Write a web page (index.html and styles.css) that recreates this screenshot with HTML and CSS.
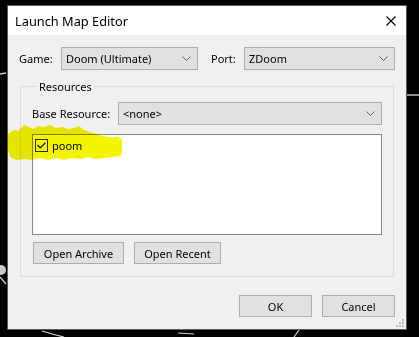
FILE: index.html
```html
<!DOCTYPE html>
<html>
  <head>
    <meta charset="utf-8">
    <title>Launch Map Editor</title>
    <link rel="stylesheet" href="styles.css">
  </head>
  <body>
    <svg class="backdrop" width="419" height="337" viewBox="0 0 419 337">
      <path d="M0 74 L6 73" stroke="#cfcfcf" stroke-width="1.5" fill="none"/>
      <path d="M407 95 L419 95" stroke="#bdbdbd" stroke-width="1.5" fill="none"/>
      <circle cx="1" cy="270" r="5" fill="#c8c8c8"/>
      <path d="M0 277 L6 284" stroke="#cfcfcf" stroke-width="1.2" fill="none"/>
      <path d="M42 331 Q55 335 64 337" stroke="#d0d0d0" stroke-width="1.2" fill="none"/>
      <path d="M178 333 L194 334" stroke="#d0d0d0" stroke-width="1.2" fill="none"/>
      <path d="M299 330 L294 337" stroke="#d0d0d0" stroke-width="1.2" fill="none"/>
    </svg>

    <div class="dialog">
      <div class="titlebar">
        <span class="title">Launch Map Editor</span>
        <svg class="close" width="10" height="10" viewBox="0 0 10 10">
          <path d="M0.5 0.5 L9.5 9.5 M9.5 0.5 L0.5 9.5" stroke="#000" stroke-width="1.1" fill="none"/>
        </svg>
      </div>

      <div class="content">
        <div class="row top">
          <label class="lbl-game">Game:</label>
          <div class="combo game">
            <span>Doom (Ultimate)</span>
            <svg class="chev" width="9" height="5" viewBox="0 0 9 5"><path d="M0.5 0.5 L4.5 4.5 L8.5 0.5" stroke="#606060" fill="none"/></svg>
          </div>
          <label class="lbl-port">Port:</label>
          <div class="combo port">
            <span>ZDoom</span>
            <svg class="chev" width="9" height="5" viewBox="0 0 9 5"><path d="M0.5 0.5 L4.5 4.5 L8.5 0.5" stroke="#606060" fill="none"/></svg>
          </div>
        </div>

        <fieldset class="group">
          <legend>Resources</legend>
          <div class="row">
            <label class="lbl-base">Base Resource:</label>
            <div class="combo base">
              <span>&lt;none&gt;</span>
              <svg class="chev" width="9" height="5" viewBox="0 0 9 5"><path d="M0.5 0.5 L4.5 4.5 L8.5 0.5" stroke="#606060" fill="none"/></svg>
            </div>
          </div>
          <div class="listbox">
            <div class="item">
              <span class="check">
                <svg width="9" height="7" viewBox="0 0 9 7"><path d="M0.5 3 L3.3 5.8 L8.5 0.6" stroke="#222" stroke-width="1.3" fill="none"/></svg>
              </span>
              <span>poom</span>
            </div>
          </div>
          <div class="row buttons-left">
            <button class="btn archive">Open Archive</button>
            <button class="btn recent">Open Recent</button>
          </div>
        </fieldset>

        <div class="row footer">
          <button class="btn ok">OK</button>
          <button class="btn cancel">Cancel</button>
        </div>
      </div>

      <svg class="grip" width="9" height="9" viewBox="0 0 9 9">
        <rect x="6" y="0" width="2" height="2" fill="#bcbcbc"/>
        <rect x="3" y="3" width="2" height="2" fill="#bcbcbc"/>
        <rect x="6" y="3" width="2" height="2" fill="#bcbcbc"/>
        <rect x="0" y="6" width="2" height="2" fill="#bcbcbc"/>
        <rect x="3" y="6" width="2" height="2" fill="#bcbcbc"/>
        <rect x="6" y="6" width="2" height="2" fill="#bcbcbc"/>
      </svg>
    </div>

    <!-- highlighter scribble drawn over the dialog -->
    <svg class="marker" width="419" height="337" viewBox="0 0 419 337">
      <polygon fill="#f4f400" points="8,134 14,130 18,131 24,125 29,127 33,129 38,126 44,127 50,125 56,128 62,127 68,129 74,128 79,126 84,130 90,132 96,134 103,136 110,137 117,137 122,139 122,150 121,156 112,157 104,158 96,159 88,157 80,159 72,158 64,160 56,158 48,160 40,158 32,160 24,159 16,160 10,157 8,150"/>
    </svg>
  </body>
</html>
```

FILE: styles.css
```css
html, body, div, fieldset, legend, label, button{
  margin:0px;
  padding:0px;
}
body{
  background-color:#000;
  font-family:"Noto Sans", "Open Sans", sans-serif;
  font-size:11px;
  color:#000;
  position:relative;
  width:419px;
  height:337px;
  overflow:hidden;
}
.backdrop{
  position:absolute;
  left:0px;
  top:0px;
}
.marker{
  position:absolute;
  left:0px;
  top:0px;
  mix-blend-mode:multiply;
}
.dialog{
  position:relative;
  margin:5px 0px 0px 7px;
  width:400px;
  height:325px;
  box-sizing:border-box;
  border:1px solid #5a5a5a;
  background-color:#f0f0f0;
  display:flex;
  flex-direction:column;
}
.titlebar{
  height:29px;
  background-color:#fff;
  display:flex;
  align-items:center;
  justify-content:space-between;
  padding:0px 10px 0px 7px;
}
.title{
  font-size:12.8px;
  line-height:16px;
}
.content{
  padding:12px 11px 0px 11px;
  display:flex;
  flex-direction:column;
}
.row{
  display:flex;
  align-items:center;
}
.combo{
  height:23px;
  box-sizing:border-box;
  border:1px solid #adadad;
  background-color:#e1e1e1;
  display:flex;
  align-items:center;
  justify-content:space-between;
  padding:0px 6px 0px 4px;
}
.lbl-game{
  width:42px;
}
.combo.game{
  width:137px;
}
.lbl-port{
  margin-left:13px;
  width:33px;
}
.combo.port{
  flex:1;
}
.group{
  margin:9px 1px 0px 1px;
  border:1px solid #dcdcdc;
  padding:8px 11px 12px 11px;
  display:flex;
  flex-direction:column;
}
.group legend{
  margin-left:5px;
  padding:0px 2px;
}
.lbl-base{
  width:86px;
}
.combo.base{
  flex:1;
}
.listbox{
  margin-top:9px;
  height:101px;
  box-sizing:border-box;
  border:1px solid #828790;
  background-color:#fff;
  padding:3px 2px;
}
.item{
  display:flex;
  align-items:center;
  gap:4px;
}
.check{
  width:13px;
  height:13px;
  box-sizing:border-box;
  border:1px solid #333;
  background-color:#fff;
  display:flex;
  align-items:center;
  justify-content:center;
}
.btn{
  height:22px;
  box-sizing:border-box;
  border:1px solid #adadad;
  background-color:#e1e1e1;
  font-family:inherit;
  font-size:11px;
  color:#000;
}
.buttons-left{
  margin-top:7px;
  gap:10px;
}
.buttons-left .archive{
  margin-left:1px;
  width:91px;
}
.buttons-left .recent{
  width:87px;
}
.footer{
  justify-content:flex-end;
  margin-top:18px;
  gap:10px;
}
.footer .btn{
  width:73px;
}
.grip{
  position:absolute;
  right:1px;
  bottom:1px;
}
```
